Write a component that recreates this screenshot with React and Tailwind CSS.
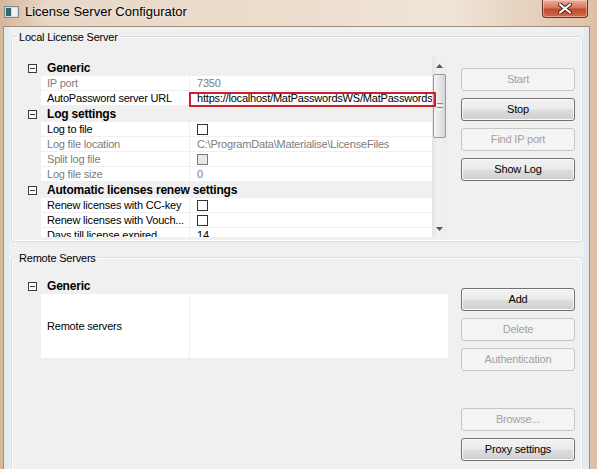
import React from "react";

const localRows = [
  { cat: "Generic" },
  { label: "IP port", value: "7350", ro: true },
  { label: "AutoPassword server URL", value: "https://localhost/MatPasswordsWS/MatPasswordsWS.svc" },
  { cat: "Log settings" },
  { label: "Log to file", check: true },
  { label: "Log file location", value: "C:\\ProgramData\\Materialise\\LicenseFiles", ro: true },
  { label: "Split log file", check: true, ro: true },
  { label: "Log file size", value: "0", ro: true },
  { cat: "Automatic licenses renew settings" },
  { label: "Renew licenses with CC-key", check: true },
  { label: "Renew licenses with Vouch...", check: true },
  { label: "Days till license expired", value: "14" },
];

const MinusBox = () => (
  <div className="w-[9px] h-[9px] border border-[#3c3c3c] bg-[#fafafa] flex items-center justify-center">
    <div className="w-[5px] h-px bg-[#3c3c3c]" />
  </div>
);

const Check = ({ disabled }) => (
  <div
    className={
      disabled
        ? "w-[11px] h-[11px] border border-[#7a7a7a] bg-[#e8e8e8]"
        : "w-[11px] h-[11px] border border-[#333333] bg-white"
    }
  />
);

const CatRow = ({ title }) => (
  <div className="flex h-[16px] items-center">
    <div className="w-[19px] shrink-0 pl-[6px]">
      <MinusBox />
    </div>
    <span className="pl-[6px] text-[12px] font-bold leading-[16px] whitespace-nowrap">{title}</span>
  </div>
);

const PropRow = ({ label, value, check, ro, tall }) => (
  <div className={tall ? "flex h-[65px] items-start" : "flex h-[15px] items-start"}>
    <div className="w-[19px] shrink-0" />
    <div
      className={`w-[148px] shrink-0 bg-white pl-[6px] flex items-center whitespace-nowrap overflow-hidden ${
        tall ? "h-[64px]" : "h-[14px]"
      } ${ro ? "text-[#7d7d7d]" : "text-black"}`}
    >
      {label}
    </div>
    <div
      className={`ml-px flex-1 min-w-0 bg-white pl-[7px] flex items-center whitespace-nowrap overflow-hidden ${
        tall ? "h-[64px]" : "h-[14px]"
      } ${ro ? "text-[#7d7d7d]" : "text-black"}`}
    >
      {check ? <Check disabled={ro} /> : value}
    </div>
  </div>
);

const Arrow = ({ down }) => (
  <svg width="7" height="4" viewBox="0 0 7 4">
    <path d={down ? "M0 0 L7 0 L3.5 4 Z" : "M0 4 L3.5 0 L7 4 Z"} fill="#5a5a5a" />
  </svg>
);

const ScrollBar = () => (
  <div className="w-[15px] h-full flex flex-col bg-[linear-gradient(90deg,#e4e4e4,#f1f1f1_40%,#ececec)]">
    <div className="h-[17px] flex items-center justify-center">
      <Arrow />
    </div>
    <div className="mx-px h-[64px] rounded-[2px] border border-[#9a9a9a] bg-[linear-gradient(90deg,#f4f4f4,#e6e6e6_50%,#d4d4d4)] flex flex-col items-center justify-center gap-[1px]">
      <div className="w-[6px] h-px bg-[#8a8a8a]" />
      <div className="w-[6px] h-px bg-[#fdfdfd]" />
      <div className="w-[6px] h-px bg-[#8a8a8a]" />
      <div className="w-[6px] h-px bg-[#fdfdfd]" />
    </div>
    <div className="flex-1" />
    <div className="h-[17px] flex items-center justify-center">
      <Arrow down />
    </div>
  </div>
);

const Btn = ({ children, disabled }) => (
  <div
    className={
      disabled
        ? "h-[23px] w-[114px] flex items-center justify-center rounded-[3px] border border-[#c3c7ca] bg-[#f4f4f4] text-[#a2a2a2]"
        : "h-[23px] w-[114px] flex items-center justify-center rounded-[3px] border border-[#707070] bg-[linear-gradient(#f2f2f2,#ebebeb_48%,#dddddd_52%,#cfcfcf)] shadow-[inset_0_0_0_1px_#fbfbfb] text-black"
    }
  >
    {children}
  </div>
);

const GroupBox = ({ title, className, children }) => (
  <div
    className={`relative rounded-[3px] border border-[#d5dfe5] shadow-[inset_0_0_0_1px_#ffffff] ${className}`}
  >
    <span className="absolute left-[5px] top-[-6px] px-[2px] bg-[#f0f0f0] text-[11px] leading-[13px] whitespace-nowrap">
      {title}
    </span>
    {children}
  </div>
);

export default function App() {
  return (
    <div className="w-[597px] h-[469px] overflow-hidden flex flex-col font-['Liberation_Sans',Arial,sans-serif] text-[11px] tracking-[-0.2px] text-black bg-[linear-gradient(90deg,#d6b799,#e6d7c6_8%,#ebdccb_45%,#f0e5d9_75%,#dcc1a6)]">
      {/* title bar */}
      <div className="h-[26px] shrink-0 flex items-start">
        <div className="pl-[4px] pt-[6px]">
          <svg width="15" height="12" viewBox="0 0 15 12">
            <rect x="0.5" y="0.5" width="14" height="11" fill="#d4dadd" stroke="#7c8a90" />
            <rect x="2" y="2" width="5" height="8" fill="#2f6866" />
            <rect x="8" y="2" width="5" height="8" fill="#eef2f3" />
          </svg>
        </div>
        <span className="ml-[6px] mt-[4px] text-[13px] leading-[16px] tracking-normal [text-shadow:0_0_6px_rgba(255,255,255,0.9)]">
          License Server Configurator
        </span>
        <div className="ml-auto mr-[9px] w-[46px] h-[18px] rounded-b-[4px] border border-t-0 border-[#6b3226] bg-[linear-gradient(#eab0a0,#d9765f_45%,#c4492e_55%,#d26a4c)] shadow-[inset_0_0_0_1px_rgba(255,220,210,0.5)] flex items-center justify-center">
          <svg width="14" height="11" viewBox="0 0 14 11">
            <path d="M2 1.5 L12 9.5 M12 1.5 L2 9.5" stroke="#4a2118" strokeWidth="4" strokeLinecap="round" />
            <path d="M2 1.5 L12 9.5 M12 1.5 L2 9.5" stroke="#ffffff" strokeWidth="2.2" strokeLinecap="round" />
          </svg>
        </div>
      </div>

      {/* body */}
      <div className="flex-1 flex pl-[3px] pr-[7px]">
        <div className="flex-1 border-l border-t border-r border-[#9d8e7f] bg-[#f0f0f0] shadow-[inset_5px_0_0_#e4eaee,inset_-5px_0_0_#e4eaee] pl-[7px] pr-[6px] pt-[9px] flex flex-col">
          {/* Local License Server */}
          <GroupBox title="Local License Server" className="h-[206px] shrink-0">
            <div className="flex pl-[10px] pt-[20px]">
              <div className="relative w-[425px] h-[180px] flex">
                <div className="flex-1 pt-[3px] overflow-hidden">
                  {localRows.map((r, i) =>
                    r.cat ? <CatRow key={i} title={r.cat} /> : <PropRow key={i} {...r} />
                  )}
                </div>
                <ScrollBar />
                <div className="absolute left-[167px] top-[35px] w-[247px] h-[15px] border-2 border-[#cc1f2d]" />
              </div>
              <div className="ml-[14px] pt-[11px] flex flex-col gap-[7px]">
                <Btn disabled>Start</Btn>
                <Btn>Stop</Btn>
                <Btn disabled>Find IP port</Btn>
                <Btn>Show Log</Btn>
              </div>
            </div>
          </GroupBox>

          {/* Remote Servers */}
          <GroupBox title="Remote Servers" className="mt-[15px] h-[260px] shrink-0">
            <div className="flex pl-[10px]">
              <div className="w-[426px] pt-[20px]">
                <div className="h-[85px]">
                  <CatRow title="Generic" />
                  <PropRow label="Remote servers" value="" tall />
                </div>
              </div>
              <div className="ml-[13px] pt-[30px] flex flex-col">
                <Btn>Add</Btn>
                <div className="mt-[7px]">
                  <Btn disabled>Delete</Btn>
                </div>
                <div className="mt-[7px]">
                  <Btn disabled>Authentication</Btn>
                </div>
                <div className="mt-[37px]">
                  <Btn disabled>Browse...</Btn>
                </div>
                <div className="mt-[7px]">
                  <Btn>Proxy settings</Btn>
                </div>
              </div>
            </div>
          </GroupBox>
        </div>
      </div>
    </div>
  );
}
